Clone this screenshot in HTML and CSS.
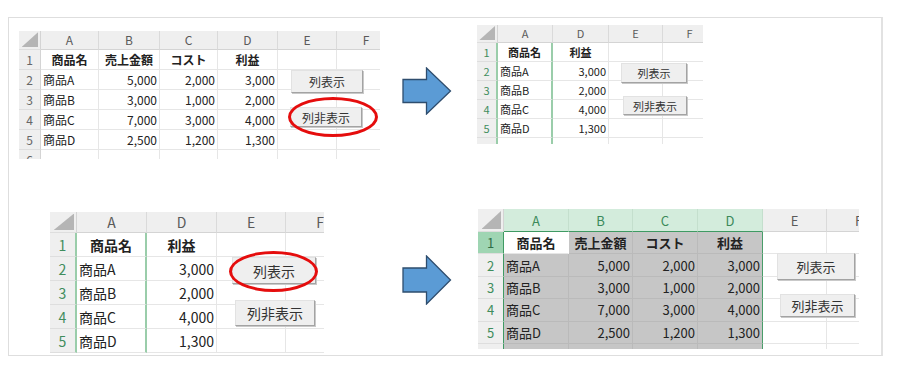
FILE: index.html
```html
<!DOCTYPE html>
<html lang="ja">
<head>
  <meta charset="UTF-8" />
  <title>列の表示・非表示</title>
  <link rel="stylesheet" href="styles.css">
</head>
<body>

  <div class="frame">

    <!-- 上段：元の表 → 列非表示 -->
    <div class="sheet s1">
      <table>
        <colgroup>
          <col class="w-rh"><col class="w-a"><col class="w-b"><col class="w-c"><col class="w-d"><col class="w-e"><col class="w-f">
        </colgroup>
        <tr class="hdr"><th class="corner"></th><th>A</th><th>B</th><th>C</th><th>D</th><th>E</th><th>F</th></tr>
        <tr><th>1</th><td class="bold ctr">商品名</td><td class="bold ctr">売上金額</td><td class="bold ctr">コスト</td><td class="bold ctr">利益</td><td></td><td></td></tr>
        <tr><th>2</th><td>商品A</td><td class="num">5,000</td><td class="num">2,000</td><td class="num">3,000</td><td></td><td></td></tr>
        <tr><th>3</th><td>商品B</td><td class="num">3,000</td><td class="num">1,000</td><td class="num">2,000</td><td></td><td></td></tr>
        <tr><th>4</th><td>商品C</td><td class="num">7,000</td><td class="num">3,000</td><td class="num">4,000</td><td></td><td></td></tr>
        <tr><th>5</th><td>商品D</td><td class="num">2,500</td><td class="num">1,200</td><td class="num">1,300</td><td></td><td></td></tr>
        <tr><th>6</th><td></td><td></td><td></td><td></td><td></td><td></td></tr>
      </table>
      <button class="xbtn show">列表示</button>
      <button class="xbtn hide">列非表示</button>
      <span class="ring"></span>
    </div>

    <div class="arrow a1">
      <svg width="50" height="48" viewBox="0 0 50 48">
        <polygon points="1,12.5 24.5,12.5 24.5,1 48.5,24 24.5,47 24.5,35.5 1,35.5" fill="#5b9bd5" stroke="#2e4d6e" stroke-width="1.3"/>
      </svg>
    </div>

    <div class="sheet s2">
      <table>
        <colgroup>
          <col class="w-rh"><col class="w-a"><col class="w-d"><col class="w-e"><col class="w-f">
        </colgroup>
        <tr class="hdr"><th class="corner"></th><th>A</th><th>D</th><th>E</th><th>F</th></tr>
        <tr><th>1</th><td class="bold ctr split">商品名</td><td class="bold ctr">利益</td><td></td><td></td></tr>
        <tr><th>2</th><td class="split">商品A</td><td class="num">3,000</td><td></td><td></td></tr>
        <tr><th>3</th><td class="split">商品B</td><td class="num">2,000</td><td></td><td></td></tr>
        <tr><th>4</th><td class="split">商品C</td><td class="num">4,000</td><td></td><td></td></tr>
        <tr><th>5</th><td class="split">商品D</td><td class="num">1,300</td><td></td><td></td></tr>
        <tr><th>6</th><td class="split"></td><td></td><td></td><td></td></tr>
      </table>
      <button class="xbtn show">列表示</button>
      <button class="xbtn hide">列非表示</button>
    </div>

    <!-- 下段：列非表示 → 列表示 -->
    <div class="sheet s3">
      <table>
        <colgroup>
          <col class="w-rh"><col class="w-a"><col class="w-d"><col class="w-e"><col class="w-f">
        </colgroup>
        <tr class="hdr"><th class="corner"></th><th>A</th><th>D</th><th>E</th><th>F</th></tr>
        <tr><th>1</th><td class="bold ctr split">商品名</td><td class="bold ctr">利益</td><td></td><td></td></tr>
        <tr><th>2</th><td class="split">商品A</td><td class="num">3,000</td><td></td><td></td></tr>
        <tr><th>3</th><td class="split">商品B</td><td class="num">2,000</td><td></td><td></td></tr>
        <tr><th>4</th><td class="split">商品C</td><td class="num">4,000</td><td></td><td></td></tr>
        <tr><th>5</th><td class="split">商品D</td><td class="num">1,300</td><td></td><td></td></tr>
      </table>
      <button class="xbtn show">列表示</button>
      <button class="xbtn hide">列非表示</button>
      <span class="ring"></span>
    </div>

    <div class="arrow a2">
      <svg width="50" height="50" viewBox="0 0 50 50">
        <polygon points="1,13 24.5,13 24.5,1 48.5,25 24.5,49 24.5,37 1,37" fill="#5b9bd5" stroke="#2e4d6e" stroke-width="1.3"/>
      </svg>
    </div>

    <div class="sheet s4">
      <table>
        <colgroup>
          <col class="w-rh"><col class="w-a"><col class="w-b"><col class="w-c"><col class="w-d"><col class="w-e"><col class="w-f">
        </colgroup>
        <tr class="hdr"><th class="corner"></th><th class="sel">A</th><th class="sel">B</th><th class="sel">C</th><th class="sel">D</th><th>E</th><th>F</th></tr>
        <tr><th class="active">1</th><td class="bold ctr cur">商品名</td><td class="bold ctr on">売上金額</td><td class="bold ctr on">コスト</td><td class="bold ctr on edge">利益</td><td></td><td></td></tr>
        <tr><th>2</th><td class="on">商品A</td><td class="num on">5,000</td><td class="num on">2,000</td><td class="num on edge">3,000</td><td></td><td></td></tr>
        <tr><th>3</th><td class="on">商品B</td><td class="num on">3,000</td><td class="num on">1,000</td><td class="num on edge">2,000</td><td></td><td></td></tr>
        <tr><th>4</th><td class="on">商品C</td><td class="num on">7,000</td><td class="num on">3,000</td><td class="num on edge">4,000</td><td></td><td></td></tr>
        <tr><th>5</th><td class="on">商品D</td><td class="num on">2,500</td><td class="num on">1,200</td><td class="num on edge">1,300</td><td></td><td></td></tr>
        <tr><th>6</th><td class="on"></td><td class="on"></td><td class="on"></td><td class="on edge"></td><td></td><td></td></tr>
      </table>
      <button class="xbtn show">列表示</button>
      <button class="xbtn hide">列非表示</button>
    </div>

  </div>

</body>
</html>
```

FILE: styles.css
```css
body {
  margin: 0;
  background: #fff;
  font-family: "Noto Sans CJK JP", "Noto Sans", sans-serif;
  color: #222;
}

/* 外枠 */
.frame {
  margin: 17px 0 0 8px;
  width: 872px;
  height: 337px;
  border: 1px solid #dedede;
  border-right: 2px solid #e2e2e2;
  display: grid;
  grid-template-columns: 383px 85px 1fr;
  grid-template-rows: 180px 1fr;
  align-items: start;
  overflow: hidden;
}

/* シート共通 */
.sheet {
  position: relative;
  overflow: hidden;
  font-size: var(--fs);
}

.sheet table {
  border-collapse: separate;
  border-spacing: 0;
  table-layout: fixed;
}

.sheet th,
.sheet td {
  box-sizing: border-box;
  padding: 0 2px;
  border-right: 1px solid #e6e6e6;
  border-bottom: 1px solid #e6e6e6;
  white-space: nowrap;
  overflow: hidden;
  font-weight: normal;
  line-height: 1;
}

.sheet tr {
  height: var(--rh);
}

.sheet tr.hdr {
  height: var(--hh);
}

.sheet .hdr th {
  background: #efefef;
  color: #5a5a5a;
  text-align: center;
  border-right-color: #dadada;
  border-bottom-color: #d4d4d4;
}

.sheet tr th:first-child {
  background: #efefef;
  color: #666;
  text-align: center;
  border-right-color: #d4d4d4;
  border-bottom-color: #dedede;
  padding: 0;
}

.sheet .corner {
  position: relative;
}

.sheet .corner::after {
  content: "";
  position: absolute;
  right: 2px;
  bottom: 2px;
  width: 78%;
  height: 82%;
  background: #b5b5b5;
  clip-path: polygon(100% 0, 100% 100%, 0 100%);
}

.sheet .bold { font-weight: bold; }
.sheet .ctr { text-align: center; }
.sheet .num { text-align: right; }

/* フォームボタン */
.xbtn {
  position: absolute;
  box-sizing: border-box;
  margin: 0;
  padding: 0;
  font-family: inherit;
  font-size: var(--bfs);
  color: #333;
  background: #efefef;
  border: 1px solid;
  border-color: #e2e2e2 #a3a3a3 #a3a3a3 #e2e2e2;
  box-shadow: 1px 1px 0 #c9c9c9;
}

/* 赤丸 */
.ring {
  position: absolute;
  box-sizing: border-box;
  border: 3px solid #e50d0d;
  border-radius: 50%;
}

/* 矢印 */
.arrow { margin-left: 10px; }
.arrow svg { display: block; }
.a1 { margin-top: 49px; }
.a2 { margin-top: 57px; }

/* 非表示列の境目 */
.s2 tr:not(.hdr) th:first-child,
.s3 tr:not(.hdr) th:first-child {
  color: #3f8d5d;
  border-right: 2px solid #9acdaa;
}

.s2 td.split,
.s3 td.split {
  border-right: 2px solid #9acdaa;
}

/* 上段左 */
.s1 {
  --fs: 12px; --rh: 20px; --hh: 19px; --bfs: 12px;
  margin: 13px 0 0 10px;
  width: 361px;
  height: 128px;
}
.s1 table { width: 377px; }
.s1 .w-rh { width: 22px; }
.s1 .w-a { width: 58px; }
.s1 .w-b { width: 61px; }
.s1 .w-c { width: 58px; }
.s1 .w-d { width: 60px; }
.s1 .w-e { width: 59px; }
.s1 .w-f { width: 59px; }
.s1 .show { left: 272px; top: 39px; width: 72px; height: 23px; }
.s1 .hide { left: 271px; top: 76px; width: 72px; height: 20px; }
.s1 .ring { left: 269px; top: 66px; width: 90px; height: 40px; }

/* 上段右 */
.s2 {
  --fs: 11px; --rh: 19px; --hh: 18px; --bfs: 11px;
  margin: 7px 0 0 0;
  width: 226px;
  height: 119px;
}
.s2 table { width: 240px; }
.s2 .w-rh { width: 21px; }
.s2 .w-a { width: 55px; }
.s2 .w-d { width: 56px; }
.s2 .w-e { width: 54px; }
.s2 .w-f { width: 54px; }
.s2 .show { left: 144px; top: 38px; width: 66px; height: 20px; }
.s2 .hide { left: 146px; top: 71px; width: 64px; height: 19px; }

/* 下段左 */
.s3 {
  --fs: 14px; --rh: 24px; --hh: 21px; --bfs: 14px;
  margin: 14px 0 0 41px;
  width: 274px;
  height: 144px;
}
.s3 table { width: 305px; }
.s3 .w-rh { width: 27px; }
.s3 .w-a { width: 70px; }
.s3 .w-d { width: 70px; }
.s3 .w-e { width: 69px; }
.s3 .w-f { width: 69px; }
.s3 .show { left: 182px; top: 45px; width: 84px; height: 27px; }
.s3 .hide { left: 185px; top: 88px; width: 80px; height: 26px; }
.s3 .ring { left: 179px; top: 39px; width: 89px; height: 41px; }

/* 下段右（A:D 選択中） */
.s4 {
  --fs: 13px; --rh: 22.4px; --hh: 23px; --bfs: 13px;
  margin: 11px 0 0 1px;
  width: 381px;
  height: 140px;
}
.s4 table { width: 413px; }
.s4 .w-rh { width: 26px; }
.s4 .w-a { width: 65px; }
.s4 .w-b { width: 64px; }
.s4 .w-c { width: 65px; }
.s4 .w-d { width: 65px; }
.s4 .w-e { width: 64px; }
.s4 .w-f { width: 64px; }
.s4 .show { left: 299px; top: 44px; width: 78px; height: 27px; }
.s4 .hide { left: 302px; top: 85px; width: 75px; height: 23px; }

.s4 tr:not(.hdr) th:first-child {
  color: #3f8d5d;
  border-right: 1px solid #3f9a63;
}

.s4 .hdr th.sel {
  background: #d3ecdc;
  color: #3b8a5a;
  border-right-color: #c4dfcd;
  border-bottom: 1px solid #3f9a63;
}

.s4 th.active {
  background: #9fd5b3 !important;
  color: #2d6f47 !important;
}

.s4 td.on {
  background: #c6c6c6;
  border-right-color: #bababa;
  border-bottom-color: #bababa;
}

.s4 td.edge {
  border-right: 1px solid #4a9d6a;
}

.s4 td.cur {
  background: #fff;
  border-right-color: #fff;
}
```
